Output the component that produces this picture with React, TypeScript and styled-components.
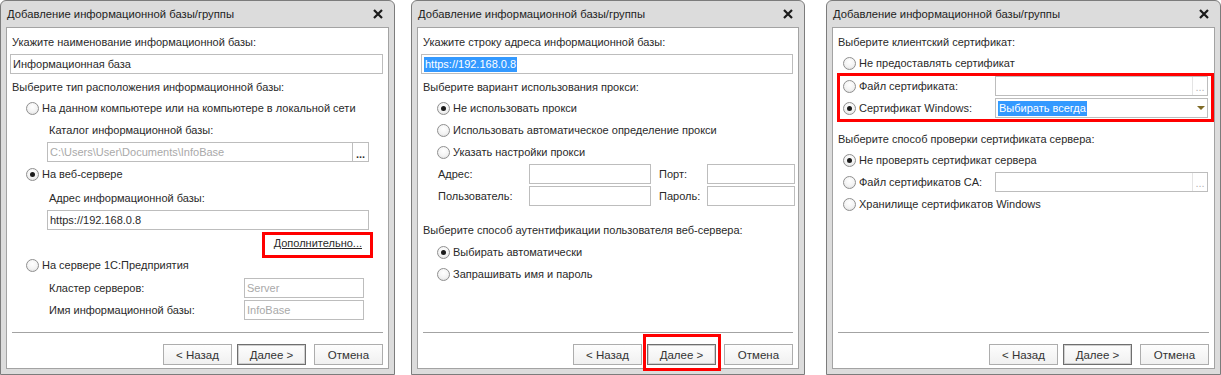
import React from 'react'
import styled, { createGlobalStyle } from 'styled-components'

const GlobalStyle = createGlobalStyle`
  html, body {
    margin: 0;
    padding: 0;
    background: #ffffff;
  }
  body {
    font-family: "Liberation Sans", Arial, sans-serif;
    font-size: 11px;
    color: #2a2a2a;
  }
  * { box-sizing: border-box; }
`

export default function App() {
  return (
    <>
      <GlobalStyle />
      <Desktop>
        <LocationDialog />
        <ProxyDialog />
        <CertificateDialog />
      </Desktop>
    </>
  )
}

function Dialog({ width, ml, children }: { width: number; ml?: number; children: React.ReactNode }) {
  return (
    <Window $w={width} $ml={ml}>
      <TitleBar>
        <Title>Добавление информационной базы/группы</Title>
        <svg width="10" height="10" viewBox="0 0 10 10">
          <path d="M1 1 L9 9 M9 1 L1 9" stroke="#1a1a1a" strokeWidth="2.2" />
        </svg>
      </TitleBar>
      <Body>{children}</Body>
    </Window>
  )
}

function Footer({ markNext }: { markNext?: boolean }) {
  return (
    <Bottom>
      <Button $mr={5}>&lt; Назад</Button>
      <Button $mr={8} $default $marked={markNext}>Далее &gt;</Button>
      <Button>Отмена</Button>
    </Bottom>
  )
}

function LocationDialog() {
  return (
    <Dialog width={395}>
      <Row $mt={4}>Укажите наименование информационной базы:</Row>
      <Row $mt={2} $pl={3}>
        <Field $w={373}>Информационная база</Field>
      </Row>
      <Row $mt={3}>Выберите тип расположения информационной базы:</Row>
      <Row $mt={1} $pl={19}>
        <RadioMark />На данном компьютере или на компьютере в локальной сети
      </Row>
      <Row $mt={2} $pl={42}>Каталог информационной базы:</Row>
      <Row $mt={2} $pl={40}>
        <Field $w={306} $dim>C:\Users\User\Documents\InfoBase</Field>
        <PickButton>...</PickButton>
      </Row>
      <Row $mt={2} $pl={19}>
        <RadioMark $on />На веб-сервере
      </Row>
      <Row $mt={4} $pl={42}>Адрес информационной базы:</Row>
      <Row $mt={2} $pl={40}>
        <Field $w={322}>https://192.168.0.8</Field>
      </Row>
      <LinkRow $mt={3}>
        <MoreLink>Дополнительно...</MoreLink>
      </LinkRow>
      <Row $mt={2} $pl={19}>
        <RadioMark />На сервере 1С:Предприятия
      </Row>
      <Row $mt={3} $pl={42}>
        <FieldLabel $w={195}>Кластер серверов:</FieldLabel>
        <Field $w={120} $dim>Server</Field>
      </Row>
      <Row $mt={2} $pl={42}>
        <FieldLabel $w={195}>Имя информационной базы:</FieldLabel>
        <Field $w={120} $dim>InfoBase</Field>
      </Row>
      <Footer />
    </Dialog>
  )
}

function ProxyDialog() {
  return (
    <Dialog width={394} ml={16}>
      <Row $mt={4}>Укажите строку адреса информационной базы:</Row>
      <Row $mt={2} $pl={3}>
        <Field $w={372}>
          <Selection>https://192.168.0.8</Selection>
        </Field>
      </Row>
      <Row $mt={3}>Выберите вариант использования прокси:</Row>
      <Row $mt={1} $pl={19}>
        <RadioMark $on />Не использовать прокси
      </Row>
      <Row $mt={2} $pl={19}>
        <RadioMark />Использовать автоматическое определение прокси
      </Row>
      <Row $mt={2} $pl={19}>
        <RadioMark />Указать настройки прокси
      </Row>
      <Row $mt={2} $pl={20}>
        <FieldLabel $w={91}>Адрес:</FieldLabel>
        <Field $w={122} />
        <FieldLabel $w={48} $ml={8}>Порт:</FieldLabel>
        <Field $w={88} />
      </Row>
      <Row $mt={2} $pl={20}>
        <FieldLabel $w={91}>Пользователь:</FieldLabel>
        <Field $w={122} />
        <FieldLabel $w={48} $ml={8}>Пароль:</FieldLabel>
        <Field $w={88} />
      </Row>
      <Row $mt={14}>Выберите способ аутентификации пользователя веб-сервера:</Row>
      <Row $mt={2} $pl={19}>
        <RadioMark $on />Выбирать автоматически
      </Row>
      <Row $mt={2} $pl={19}>
        <RadioMark />Запрашивать имя и пароль
      </Row>
      <Footer markNext />
    </Dialog>
  )
}

function CertificateDialog() {
  return (
    <Dialog width={395} ml={21}>
      <Row $mt={4}>Выберите клиентский сертификат:</Row>
      <Row $mt={1} $pl={10}>
        <RadioMark />Не предоставлять сертификат
      </Row>
      <Marked>
        <Row $mt={0} $pl={10}>
          <FieldLabel $w={152}><RadioMark />Файл сертификата:</FieldLabel>
          <Field $w={213}>
            <Dots>...</Dots>
          </Field>
        </Row>
        <Row $mt={2} $pl={10}>
          <FieldLabel $w={152}><RadioMark $on />Сертификат Windows:</FieldLabel>
          <Field $w={213}>
            <Selection>Выбирать всегда</Selection>
            <DropArrow />
          </Field>
        </Row>
      </Marked>
      <Row $mt={11}>Выберите способ проверки сертификата сервера:</Row>
      <Row $mt={1} $pl={10}>
        <RadioMark $on />Не проверять сертификат сервера
      </Row>
      <Row $mt={2} $pl={10}>
        <FieldLabel $w={152}><RadioMark />Файл сертификатов CA:</FieldLabel>
        <Field $w={213}>
          <Dots>...</Dots>
        </Field>
      </Row>
      <Row $mt={2} $pl={10}>
        <RadioMark />Хранилище сертификатов Windows
      </Row>
      <Footer />
    </Dialog>
  )
}

const Desktop = styled.div`
  display: flex;
  align-items: flex-start;
  width: 1221px;
  height: 375px;
`
const Window = styled.section<{ $w: number; $ml?: number }>`
  width: ${p => p.$w}px;
  height: 375px;
  margin-left: ${p => p.$ml ?? 0}px;
  flex-shrink: 0;
  display: flex;
  flex-direction: column;
  border: 1px solid #7c7c7c;
  border-radius: 6px 6px 0 0;
  background: #dcdcdc;
  padding: 0 5px 5px;
`
const TitleBar = styled.header`
  height: 26px;
  display: flex;
  align-items: center;
  justify-content: space-between;
  padding: 0 6px 0 1px;
`
const Title = styled.span`
  color: #1e1e1e;
  font-size: 11.25px;
  white-space: nowrap;
`
const Body = styled.div`
  flex: 1;
  display: flex;
  flex-direction: column;
  background: #ffffff;
  border: 1px solid #a3a3a3;
`
const Row = styled.div<{ $mt?: number; $pl?: number }>`
  display: flex;
  align-items: center;
  height: 20px;
  margin-top: ${p => p.$mt ?? 2}px;
  padding-left: ${p => p.$pl ?? 5}px;
  white-space: nowrap;
`
const LinkRow = styled(Row)`
  justify-content: flex-end;
  padding-right: 26px;
`
const FieldLabel = styled.span<{ $w: number; $ml?: number }>`
  display: flex;
  align-items: center;
  width: ${p => p.$w}px;
  margin-left: ${p => p.$ml ?? 0}px;
  flex-shrink: 0;
`
const RadioMark = styled.span<{ $on?: boolean }>`
  width: 13px;
  height: 13px;
  margin-right: 3px;
  flex-shrink: 0;
  border-radius: 50%;
  border: 1px solid #8f8f8f;
  background: radial-gradient(circle at 50% 35%, #ffffff 0%, #f3f3f3 55%, #d9d9d9 100%);
  display: inline-flex;
  align-items: center;
  justify-content: center;
  &::after {
    content: '';
    display: ${p => (p.$on ? 'block' : 'none')};
    width: 5px;
    height: 5px;
    border-radius: 50%;
    background: #1c1c1c;
  }
`
const Field = styled.div<{ $w: number; $dim?: boolean }>`
  width: ${p => p.$w}px;
  height: 20px;
  flex-shrink: 0;
  display: flex;
  align-items: center;
  padding-left: 2px;
  border: 1px solid #bdbdbd;
  background: #ffffff;
  color: ${p => (p.$dim ? '#a9a9a9' : '#2a2a2a')};
  overflow: hidden;
`
const PickButton = styled.span`
  width: 16px;
  height: 20px;
  flex-shrink: 0;
  border: 1px solid #bdbdbd;
  border-left: none;
  display: flex;
  align-items: flex-end;
  justify-content: center;
  padding-bottom: 3px;
  font-weight: bold;
  font-size: 11px;
  line-height: 8px;
  color: #333333;
`
const Dots = styled.span`
  margin-left: auto;
  width: 15px;
  height: 100%;
  border-left: 1px solid #e4e4e4;
  display: flex;
  align-items: flex-end;
  justify-content: center;
  padding-bottom: 4px;
  font-size: 11px;
  line-height: 8px;
  color: #b4b4b4;
`
const Selection = styled.span`
  background: #3399ff;
  color: #ffffff;
  height: 15px;
  line-height: 15px;
  padding: 0 1px;
`
const DropArrow = styled.span`
  margin-left: auto;
  margin-right: 2px;
  width: 0;
  height: 0;
  border-left: 4px solid transparent;
  border-right: 4px solid transparent;
  border-top: 4px solid #7f6b26;
`
const MoreLink = styled.span`
  position: relative;
  display: inline-flex;
  align-items: center;
  height: 20px;
  text-decoration: underline;
  color: #2a2a2a;
  &::after {
    content: '';
    position: absolute;
    left: -12px;
    right: -11px;
    top: -1px;
    bottom: -5px;
    border: 3px solid #ff0000;
  }
`
const Marked = styled.div`
  position: relative;
  margin-top: 3px;
  &::after {
    content: '';
    position: absolute;
    left: 4px;
    right: 0;
    top: -3px;
    bottom: -4px;
    border: 3px solid #ff0000;
  }
`
const Bottom = styled.footer`
  margin: auto 5px 0 5px;
  border-top: 1px solid #a3a3a3;
  padding: 11px 0 3px;
  display: flex;
  justify-content: flex-end;
`
const Button = styled.div<{ $mr?: number; $default?: boolean; $marked?: boolean }>`
  position: relative;
  width: 69px;
  height: 21px;
  margin-right: ${p => p.$mr ?? 0}px;
  display: flex;
  align-items: center;
  justify-content: center;
  border: 1px solid ${p => (p.$default ? '#6f6f6f' : '#adadad')};
  box-shadow: ${p => (p.$default ? 'inset 0 0 0 1px #cfcfcf' : 'none')};
  background: linear-gradient(#fdfdfd, #f0f0f0);
  color: #333333;
  font-size: 11.5px;
  &::after {
    content: '';
    display: ${p => (p.$marked ? 'block' : 'none')};
    position: absolute;
    left: -5px;
    right: -6px;
    top: -11px;
    bottom: -7px;
    border: 3px solid #ff0000;
  }
`
